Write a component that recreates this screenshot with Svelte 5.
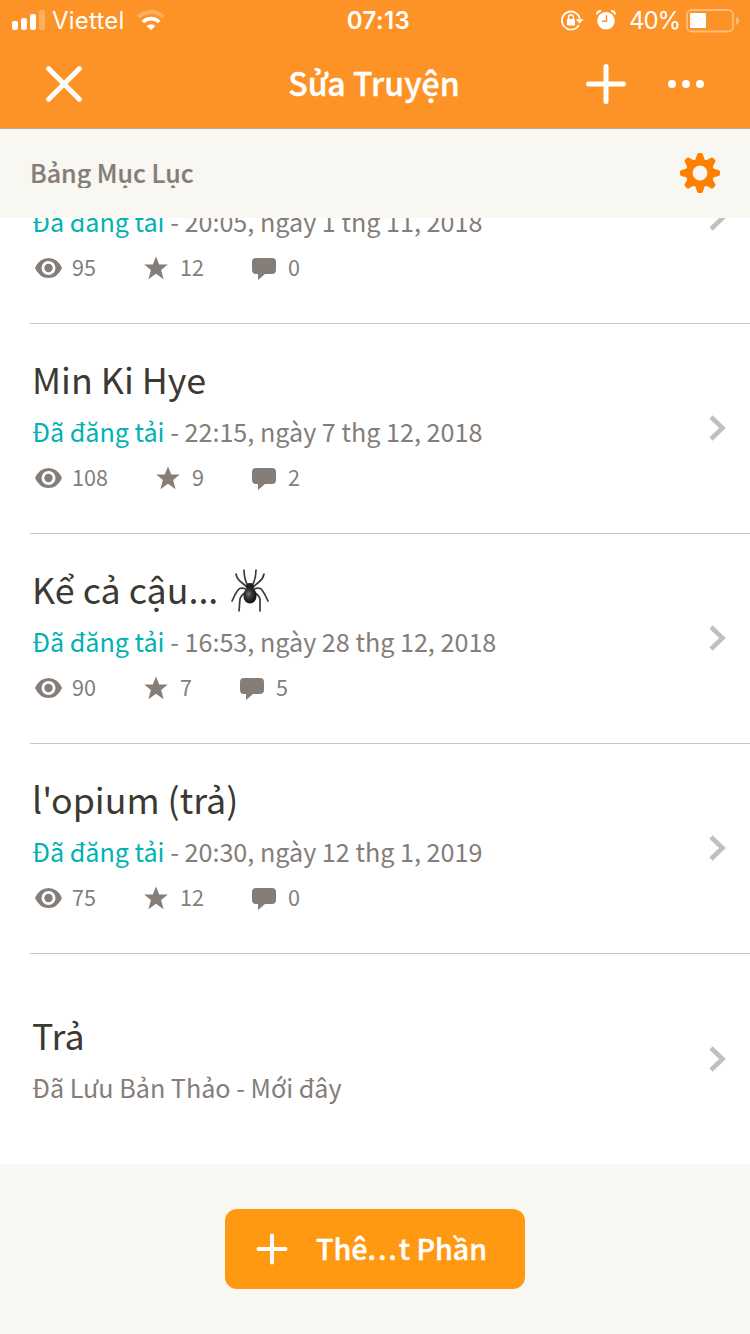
<script>
  const parts = [
    { title: '', published: true, date: '20:05, ngày 1 thg 11, 2018', reads: 95, votes: 12, comments: 0 },
    { title: 'Min Ki Hye', published: true, date: '22:15, ngày 7 thg 12, 2018', reads: 108, votes: 9, comments: 2 },
    { title: 'Kể cả cậu...', spider: true, published: true, date: '16:53, ngày 28 thg 12, 2018', reads: 90, votes: 7, comments: 5 },
    { title: "l'opium (trả)", published: true, date: '20:30, ngày 12 thg 1, 2019', reads: 75, votes: 12, comments: 0 },
    { title: 'Trả', published: false, date: 'Mới đây' }
  ];
</script>

<div class="screen">
  <header>
    <div class="status">
      <div class="side">
        <svg class="signal" width="34" height="20" viewBox="0 0 34 20" fill="#fff">
          <rect x="0" y="11" width="6" height="9" rx="2" />
          <rect x="9" y="8" width="6" height="12" rx="2" />
          <rect x="18" y="4" width="6" height="16" rx="2" />
          <rect x="27" y="0" width="6" height="20" rx="2" opacity=".28" />
        </svg>
        <span class="carrier">Viettel</span>
        <svg class="wifi" width="28" height="21" viewBox="0 0 28 21" fill="none" stroke="#fff">
          <path d="M1.4 7.2a17.8 17.8 0 0 1 25.2 0" stroke-width="4" opacity=".28" />
          <path d="M5.8 12a11.7 11.7 0 0 1 16.4 0" stroke-width="3.8" />
          <path d="M14 20.3l-4.3-4.2a6.2 6.2 0 0 1 8.6 0z" fill="#fff" stroke="none" />
        </svg>
      </div>
      <span class="time">07:13</span>
      <div class="side right">
        <svg class="lock" width="23" height="21" viewBox="0 0 23 21" fill="none" stroke="#fff">
          <path d="M17.9 14.8A9 9 0 1 1 18.9 9.5" stroke-width="1.8" />
          <path d="M14.7 9.2h7.9l-4 4.4z" fill="#fff" stroke="none" />
          <rect x="6" y="9" width="8" height="6.5" rx="1" fill="#fff" stroke="none" />
          <path d="M7.6 9.5V7.2a2.4 2.4 0 0 1 4.8 0v2.3" stroke-width="1.5" />
        </svg>
        <svg class="alarm" width="20" height="20" viewBox="0 0 20 20">
          <circle cx="10" cy="10.8" r="8.8" fill="#fff" />
          <path d="M1 4.6Q1 1.2 5 1M19 4.6Q19 1.2 15 1" fill="none" stroke="#fff" stroke-width="1.8" />
          <path d="M10.5 5.2V11.2H6" fill="none" stroke="#fd9226" stroke-width="1.4" />
        </svg>
        <span class="percent">40%</span>
        <svg class="battery" width="54" height="24" viewBox="0 0 54 24">
          <rect x="1" y="1" width="46" height="21.5" rx="4.5" fill="none" stroke="#fff" stroke-width="1.8" opacity=".4" />
          <rect x="4" y="4" width="16" height="15" rx="1" fill="#fff" />
          <path d="M50 8q3 1.2 3 4t-3 4z" fill="#fff" opacity=".4" />
        </svg>
      </div>
    </div>
    <nav>
      <svg class="close" width="36" height="36" viewBox="0 0 36 36">
        <path d="M2.7 2.7l30.6 30.6M33.3 2.7L2.7 33.3" stroke="#fff" stroke-width="5" stroke-linecap="round" />
      </svg>
      <h1>Sửa Truyện</h1>
      <svg class="add" width="40" height="40" viewBox="0 0 40 40">
        <path d="M20 2.5v35M2.5 20h35" stroke="#fff" stroke-width="5" stroke-linecap="round" />
      </svg>
      <svg class="more" width="36" height="8" viewBox="0 0 36 8" fill="#fff">
        <circle cx="4" cy="4" r="4" /><circle cx="18" cy="4" r="4" /><circle cx="32" cy="4" r="4" />
      </svg>
    </nav>
  </header>

  <div class="contents">
    <h2>Bảng Mục Lục</h2>
    <svg width="40" height="40" viewBox="-20 -20 40 40">
      <g fill="#ff8000">
        {#each [0, 45, 90, 135, 180, 225, 270, 315] as angle}
          <path d="M-6.5-11.5Q-3.8-13.5-3.3-17.5Q-3-20-1.2-20H1.2Q3-20 3.3-17.5Q3.8-13.5 6.5-11.5z" transform="rotate({angle})" />
        {/each}
      </g>
      <circle r="10.6" fill="none" stroke="#ff8000" stroke-width="6.4" />
    </svg>
  </div>

  <main>
    {#each parts as part}
      <div class="part" class:draft={!part.published}>
        <div class="info">
          <div class="title">
            <span>{part.title}</span>
            {#if part.spider}
              <svg class="spider" width="38" height="44" viewBox="0 0 38 44">
                <defs>
                  <radialGradient id="belly" cx=".4" cy=".4" r=".6">
                    <stop offset="0" stop-color="#777" />
                    <stop offset=".45" stop-color="#333" />
                    <stop offset="1" stop-color="#111" />
                  </radialGradient>
                </defs>
                <g fill="none" stroke="#3c3c3c" stroke-width="1.7" stroke-linecap="round" stroke-linejoin="round">
                  <path d="M16 18L10 13Q6 10 5 5M17 17Q13 10 13 1M22 18L28 13Q32 10 33 5M21 17Q25 10 25 1" />
                  <path d="M15 20Q9 18 7 21Q4 25 1 32M23 20Q29 18 31 21Q34 25 37 32M15 23Q10 26 9 30L8 42M23 23Q28 26 29 30L29 42" />
                </g>
                <ellipse cx="19" cy="17.5" rx="4" ry="3.5" fill="#222" />
                <ellipse cx="19" cy="26.5" rx="6.6" ry="8" fill="url(#belly)" />
              </svg>
            {/if}
          </div>
          <div class="state">
            {#if part.published}
              <span class="published">Đã đăng tải</span> - {part.date}
            {:else}
              Đã Lưu Bản Thảo - {part.date}
            {/if}
          </div>
          {#if part.published}
            <div class="stats">
              <svg width="27" height="20" viewBox="0 0 27 20">
                <path fill-rule="evenodd" d="M0 10Q4.5 0 13.5 0T27 10Q22.5 20 13.5 20T0 10zM13.5 3a7 7 0 1 0 0 14a7 7 0 0 0 0-14z" />
                <circle cx="13.5" cy="10" r="4.2" />
              </svg>
              <span>{part.reads}</span>
              <svg width="24" height="24" viewBox="0 0 24 24">
                <path d="M12 .5l3.2 8h8.6l-6.7 5.4 2.5 9.3L12 17.8l-7.6 5.4 2.5-9.3L.2 8.5h8.6z" />
              </svg>
              <span>{part.votes}</span>
              <svg class="bubble" width="24" height="22" viewBox="0 0 24 22">
                <path d="M4 0h16q4 0 4 4v8q0 4-4 4h-7l-7 6v-6H4q-4 0-4-4V4q0-4 4-4z" />
              </svg>
              <span>{part.comments}</span>
            </div>
          {/if}
        </div>
        <svg class="chevron" width="18" height="26" viewBox="0 0 18 26">
          <path d="M2 2l11.5 11L2 24" fill="none" stroke="#c4bfbb" stroke-width="4.6" />
        </svg>
      </div>
    {/each}
  </main>

  <footer>
    <button>
      <svg width="32" height="32" viewBox="0 0 32 32">
        <path d="M16 2.5v27M2.5 16h27" stroke="#fff" stroke-width="4" stroke-linecap="round" />
      </svg>
      <span>Thê<i>...</i>t Phần</span>
    </button>
  </footer>
</div>

<style>
  :global(body) {
    margin: 0;
    background: #f8f7f2;
  }

  .screen {
    width: 750px;
    height: 1334px;
    display: flex;
    flex-direction: column;
    overflow: hidden;
    font-family: 'Noto Sans CJK SC', 'Noto Sans', sans-serif;
    color: #857d78;
  }

  svg {
    display: block;
    flex: none;
  }

  header {
    flex: none;
    height: 128px;
    background: #fd9226;
    border-bottom: 1px solid #b5aaa0;
    color: #fff;
  }

  .status {
    display: flex;
    align-items: center;
    height: 40px;
    font-family: Inter, sans-serif;
    font-size: 24px;
    line-height: 40px;
  }

  .status span {
    padding-top: 2px;
  }

  .side {
    display: flex;
    align-items: center;
    flex: 1 1 0;
  }

  .right {
    justify-content: flex-end;
  }

  .signal {
    margin-left: 12px;
  }

  .carrier {
    margin-left: 6px;
    letter-spacing: 0.2px;
  }

  .wifi {
    margin-left: 13px;
  }

  .time {
    margin-left: 7px;
    font-weight: 600;
    letter-spacing: 0.4px;
  }

  .alarm {
    margin-left: 12px;
  }

  .percent {
    margin-left: 13px;
    letter-spacing: -1.1px;
  }

  .battery {
    margin: 1px 10px 0 6px;
  }

  nav {
    display: flex;
    align-items: center;
    height: 88px;
  }

  .close {
    margin-left: 46px;
  }

  h1 {
    flex: 1;
    margin: 0;
    padding-left: 80px;
    text-align: center;
    font-size: 32px;
    font-weight: 500;
    line-height: 84px;
    height: 88px;
    letter-spacing: 0.1px;
    -webkit-text-stroke: 0.4px;
  }

  .more {
    margin: 0 46px 0 42px;
  }

  .contents {
    flex: none;
    display: flex;
    align-items: center;
    justify-content: space-between;
    height: 88px;
    padding: 0 30px 1px;
    background: #f8f7f2;
  }

  h2 {
    margin: 0;
    height: 30px;
    line-height: 28px;
    overflow: hidden;
    font-size: 25px;
    font-weight: 500;
    -webkit-text-stroke: 0.2px;
  }

  main {
    flex: none;
    height: 946px;
    overflow: hidden;
    background: #fff;
  }

  .part {
    display: flex;
    align-items: center;
    box-sizing: border-box;
    height: 210px;
    margin-left: 30px;
    padding: 0 23px 0 2px;
    border-bottom: 1px solid #c8c6c4;
  }

  .part:first-child {
    margin-top: -104px;
  }

  .part:last-child {
    border: none;
  }

  .info {
    flex: 1;
    height: 148px;
  }

  .draft .info {
    height: 96px;
  }

  .title {
    display: flex;
    height: 52px;
    line-height: 46px;
    font-size: 35.8px;
    color: #3c3832;
  }

  .spider {
    margin: 4px 0 0 13px;
  }

  .state {
    height: 52px;
    line-height: 49px;
    font-size: 25.15px;
    white-space: nowrap;
  }

  .published {
    color: #00b2b2;
  }

  .stats {
    display: flex;
    align-items: center;
    height: 38px;
    padding-left: 3px;
    line-height: 36px;
    font-size: 21.6px;
    fill: #857d78;
  }

  .stats span {
    height: 38px;
    margin: 0 48px 0 12px;
  }

  .stats svg:first-child + span {
    margin-left: 10px;
  }

  .bubble {
    margin-top: 2px;
  }

  .chevron {
    margin-bottom: 1px;
  }

  footer {
    flex: 1;
    display: flex;
    justify-content: center;
    padding-top: 45px;
  }

  button {
    display: flex;
    align-items: center;
    box-sizing: border-box;
    width: 300px;
    height: 80px;
    padding: 0 0 1px 31px;
    border: none;
    border-radius: 12px;
    background: #ff9912;
    color: #fff;
    font: 500 28.7px/78px 'Noto Sans CJK SC', 'Noto Sans', sans-serif;
    -webkit-text-stroke: 0.4px;
  }

  button span {
    height: 80px;
    margin-left: 28px;
  }

  i {
    font-style: normal;
    letter-spacing: 1.8px;
  }
</style>
